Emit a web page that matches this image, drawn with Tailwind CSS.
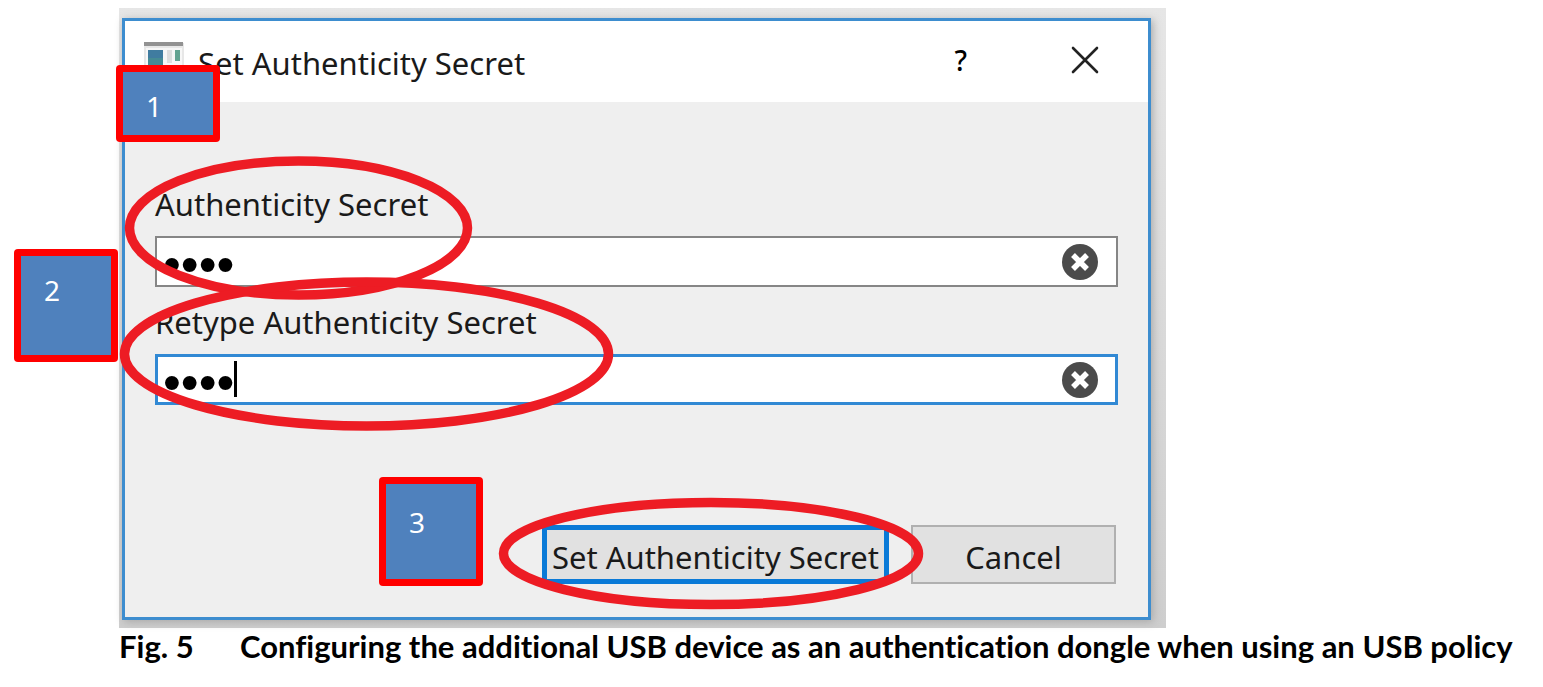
<!DOCTYPE html>
<html lang="en">
<head>
<meta charset="utf-8">
<title>Set Authenticity Secret</title>
<script src="https://cdn.jsdelivr.net/npm/@tailwindcss/browser@4"></script>
</head>
<body class="bg-white text-black font-['Noto_Sans','Open_Sans',sans-serif]">
<figure class="relative pt-2 pl-[119px]">
  <div class="w-full max-w-[1047px] bg-linear-to-b from-[#e6e6e6] to-[#cecece] pt-[10px] pr-[15px] pb-2 pl-[3px]">
    <section aria-label="Set Authenticity Secret" class="border-[3px] border-[#3d8dcf] bg-[#efefef] shadow-[2px_2px_8px_#aaaaaa]">
      <header class="flex h-[81px] items-center bg-white pr-[47px] pl-[19px]">
        <svg class="h-10 w-10 shrink-0" viewBox="0 0 40 40" aria-hidden="true">
          <rect x="0" y="1" width="40" height="39" fill="#e7e7e7"/>
          <rect x="0" y="0" width="39" height="4" fill="#929292"/>
          <rect x="2" y="6" width="36" height="33" fill="#f7f7f7"/>
          <rect x="4" y="8" width="15" height="29" fill="#458b94"/>
          <rect x="4" y="8" width="15" height="8" fill="#407ca0"/>
          <rect x="23" y="8" width="5" height="13" fill="#dedede"/>
          <rect x="31" y="8" width="5" height="11" fill="#63a391"/>
        </svg>
        <h1 class="ml-[14px] flex-1 pt-0.5 text-[31px] leading-10 text-[#1a1a1a]">Set Authenticity Secret</h1>
        <button type="button" aria-label="Help" class="mr-[102px] pb-1 text-[28px] leading-10 font-medium">?</button>
        <button type="button" aria-label="Close" class="pb-1">
          <svg class="h-8 w-8" viewBox="0 0 32 32" fill="none" stroke="#222" stroke-width="2.6" stroke-linecap="round"><path d="M4 4 28 28M28 4 4 28"/></svg>
        </button>
      </header>
      <form class="px-[30px] pt-[82px] pb-[33px]">
        <label for="secret" class="block text-[31px] leading-10 text-[#1a1a1a]">Authenticity Secret</label>
        <div class="mt-3 flex h-[51px] items-center border-2 border-[#868686] bg-white pr-[17px] pl-1.5">
          <input id="secret" type="password" value="1234" class="w-full flex-1 pt-1.5 font-['Liberation_Sans'] text-[51px] leading-10 outline-none">
          <button type="button" aria-label="Clear secret"><svg class="h-[38px] w-[38px]" viewBox="0 0 38 38"><circle cx="19" cy="19" r="18" fill="#4b4b4b"/><path d="M12 12 26 26M26 12 12 26" stroke="#fff" stroke-width="5.500"/></svg></button>
        </div>
        <label for="retype" class="mt-[15px] block text-[31px] leading-10 text-[#1a1a1a]">Retype Authenticity Secret</label>
        <div class="relative mt-3 flex h-[51px] items-center border-[3px] border-[#3189d4] bg-white pr-4 pl-[5px]">
          <input id="retype" type="password" value="1234" class="w-full flex-1 pt-1.5 font-['Liberation_Sans'] text-[51px] leading-10 outline-none">
          <span class="absolute top-1 left-[76px] h-9 w-[3px] bg-black"></span>
          <button type="button" aria-label="Clear retyped secret"><svg class="h-[38px] w-[38px]" viewBox="0 0 38 38"><circle cx="19" cy="19" r="18" fill="#4b4b4b"/><path d="M12 12 26 26M26 12 12 26" stroke="#fff" stroke-width="5.500"/></svg></button>
        </div>
        <div class="mt-[120px] flex justify-end gap-[22px] pr-0.5">
          <button type="submit" class="h-[59px] w-[347px] border-[5px] border-[#0a7ad7] bg-[#e1e1e1] pt-1 text-[31px] leading-10 whitespace-nowrap text-[#1a1a1a]">Set Authenticity Secret</button>
          <button type="button" class="h-[59px] w-[205px] border-2 border-[#b0b0b0] bg-[#e1e1e1] pt-1 text-[31px] leading-10 text-[#1a1a1a]">Cancel</button>
        </div>
      </form>
    </section>
  </div>
  <figcaption class="flex font-['Lato','Noto_Sans',sans-serif] text-[31px] leading-9 font-bold whitespace-nowrap [font-variant-ligatures:none]"><span class="w-[121px] shrink-0">Fig. 5</span><span>Configuring the additional USB device as an authentication dongle when using an USB policy</span></figcaption>

  <!-- Callouts over the dialog -->
  <svg class="pointer-events-none absolute top-0 left-0" width="1180" height="640" fill="none" stroke="#ed1c24" stroke-width="9.5" aria-hidden="true">
    <ellipse cx="298.500" cy="228" rx="169" ry="67"/>
    <ellipse cx="366.500" cy="354" rx="242" ry="72"/>
    <ellipse cx="711" cy="553.500" rx="207.500" ry="51"/>
  </svg>
  <div class="absolute top-[65px] left-[116px] h-[77px] w-[104px] rounded-[4px] bg-[#ff0000] p-[7px]"><div class="h-full bg-[#4f81bd] pt-4 pl-[23px] text-[28px] leading-9 text-white">1</div></div>
  <div class="absolute top-[249px] left-[14px] h-[113px] w-[104px] rounded-[4px] bg-[#ff0000] p-[7px]"><div class="h-full bg-[#4f81bd] pt-4 pl-[23px] text-[28px] leading-9 text-white">2</div></div>
  <div class="absolute top-[477px] left-[379px] h-[109px] w-[104px] rounded-[4px] bg-[#ff0000] p-[7px]"><div class="h-full bg-[#4f81bd] pt-5 pl-[23px] text-[28px] leading-9 text-white">3</div></div>
</figure>
</body>
</html>
